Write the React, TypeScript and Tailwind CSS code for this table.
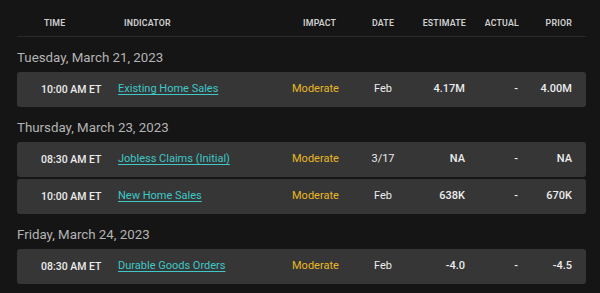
import React from "react";

type Row = { time: string; name: string; date: string; est: string; act: string; prior: string };
const groups: { day: string; rows: Row[] }[] = [
  { day: "Tuesday, March 21, 2023", rows: [{ time: "10:00 AM ET", name: "Existing Home Sales", date: "Feb", est: "4.17M", act: "-", prior: "4.00M" }] },
  {
    day: "Thursday, March 23, 2023",
    rows: [
      { time: "08:30 AM ET", name: "Jobless Claims (Initial)", date: "3/17", est: "NA", act: "-", prior: "NA" },
      { time: "10:00 AM ET", name: "New Home Sales", date: "Feb", est: "638K", act: "-", prior: "670K" },
    ],
  },
  { day: "Friday, March 24, 2023", rows: [{ time: "08:30 AM ET", name: "Durable Goods Orders", date: "Feb", est: "-4.0", act: "-", prior: "-4.5" }] },
];

const cols = "grid grid-cols-[101px_174px_60px_62px_51px_53px_54px_1fr] items-center";

export default function App() {
  return (
    <div className="w-[600px] h-[293px] overflow-hidden bg-[#151515] pl-[17px] pr-[14px]" style={{ fontFamily: "Roboto, 'Noto Sans', sans-serif" }}>
      <div className={`${cols} h-[37px] pt-[17px] items-start border-b border-[#2a2a2a] text-[8.8px] leading-[12px] font-semibold tracking-[0.2px] text-[#cfcfcf]`}>
        <div className="pl-[27px]">TIME</div>
        <div className="pl-[6px]">INDICATOR</div>
        <div className="pl-[11px]">IMPACT</div>
        <div className="text-center">DATE</div>
        <div className="text-right -mr-[1px]">ESTIMATE</div>
        <div className="text-right -mr-[1px]">ACTUAL</div>
        <div className="text-right">PRIOR</div>
        <div />
      </div>
      {groups.map((g) => (
        <div key={g.day}>
          <div className="h-[35px] pt-[13px] text-[13.3px] leading-4 text-[#b4b4b4]">{g.day}</div>
          <div className="flex flex-col gap-[2px]">
            {g.rows.map((r) => (
              <div key={r.name} className={`${cols} h-[35px] rounded-[3px] bg-[#363636] text-[11px] font-medium text-[#ececec]`}>
                <div className="pl-[24px] text-[10.5px]">{r.time}</div>
                <div>
                  <span className="text-[#3ec8c8] underline underline-offset-[2px] decoration-[1px] font-normal">{r.name}</span>
                </div>
                <div className="text-[#e9b824] font-normal">Moderate</div>
                <div className="text-center font-normal">{r.date}</div>
                <div className="text-right">{r.est}</div>
                <div className="text-right">{r.act}</div>
                <div className="text-right">{r.prior}</div>
                <div />
              </div>
            ))}
          </div>
        </div>
      ))}
    </div>
  );
}
